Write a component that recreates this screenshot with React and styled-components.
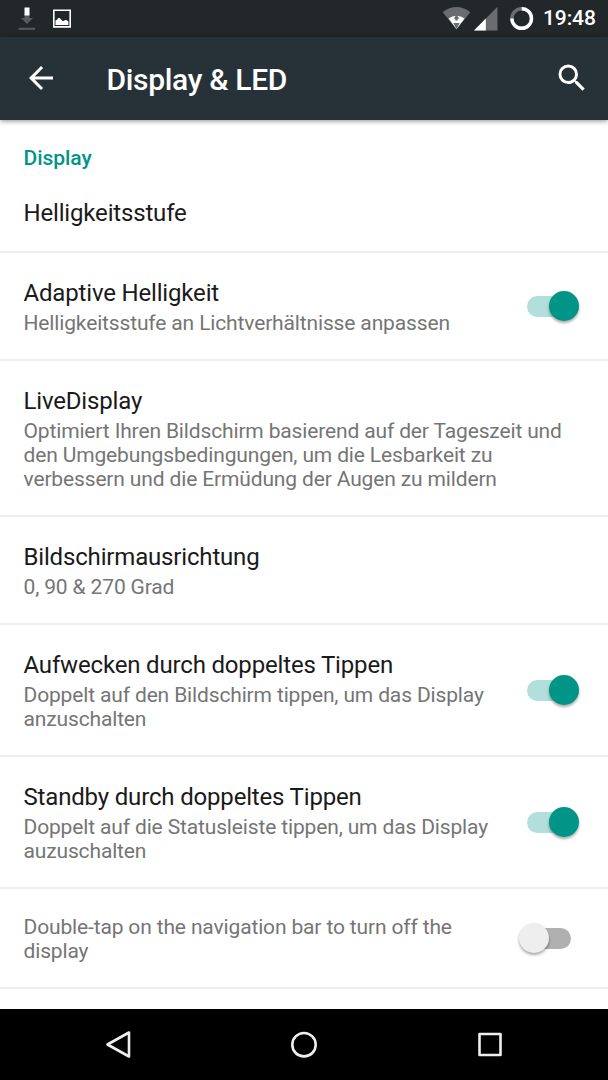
import React from "react";
import styled, { createGlobalStyle } from "styled-components";

const Global = createGlobalStyle`
  * { box-sizing: border-box; }
  body { margin: 0; background: #fff; font-family: Roboto, sans-serif; }
`;
const Screen = styled.div`
  width: 608px;
  height: 1080px;
  display: flex;
  flex-direction: column;
  overflow: hidden;
  background: #fff;
`;
const StatusBar = styled.header`
  height: 37px;
  flex: none;
  display: flex;
  align-items: center;
  justify-content: space-between;
  padding: 0 12px 0 16px;
  background: #22272a;
`;
const StatusGroup = styled.div`
  display: flex;
  align-items: center;
  gap: ${(p) => p.$gap}px;
  height: 37px;
`;
const Clock = styled.span`
  width: 53px;
  color: #fff;
  font-size: 21px;
  font-weight: 500;
  line-height: 37px;
  letter-spacing: -0.1px;
  white-space: nowrap;
`;
const AppBar = styled.div`
  height: 83px;
  flex: none;
  display: flex;
  align-items: center;
  padding: 0 18px 1px 23px;
  background: #263238;
  box-shadow: 0 1px 5px rgba(0, 0, 0, 0.45);
  z-index: 1;
`;
const Heading = styled.h1`
  margin: 3px 0 0 47.5px;
  flex: 1;
  color: #fff;
  font-size: 30px;
  font-weight: 500;
  line-height: 36px;
  letter-spacing: -0.32px;
`;
const List = styled.main`
  flex: 1;
  overflow: hidden;
`;
const Section = styled.h2`
  margin: 0;
  height: 54px;
  padding: 26px 23.5px 0;
  color: #009587;
  font-size: 21px;
  font-weight: 500;
  line-height: 25px;
  letter-spacing: -0.05px;
`;
const Row = styled.div`
  display: flex;
  align-items: center;
  justify-content: space-between;
  height: ${(p) => p.$height}px;
  padding: 0 24px 0 23.5px;
  border-bottom: 2px solid #eeeeee;
`;
const Copy = styled.div`
  padding-top: 1px;
`;
const Title = styled.div`
  color: #1a1a1a;
  font-size: 24px;
  line-height: 31px;
  letter-spacing: -0.17px;
  white-space: nowrap;
`;
const Summary = styled.div`
  color: #757575;
  font-size: 21px;
  line-height: 24px;
  letter-spacing: -0.145px;
  white-space: pre;

  ${Title} + & {
    margin-top: 2px;
  }
`;
const Switch = styled.div`
  flex: none;
  width: 44px;
  height: 21px;
  margin: 0 13px 0 8px;
  border-radius: 11px;
  background: ${(p) => (p.$on ? "#b2dfdb" : "#b0b0b0")};
  display: flex;
  align-items: center;
`;
const Thumb = styled.div`
  flex: none;
  width: 30px;
  height: 30px;
  margin-left: ${(p) => (p.$on ? 22 : -8)}px;
  border-radius: 50%;
  background: ${(p) => (p.$on ? "#009587" : "#eeeeee")};
  box-shadow: 0 2px 3px rgba(0, 0, 0, 0.35);
`;
const NavBar = styled.nav`
  height: 71px;
  flex: none;
  display: flex;
  align-items: center;
  justify-content: center;
  gap: 146px;
  background: #000;
`;

const rows = [
  { title: "Helligkeitsstufe", height: 79 },
  { title: "Adaptive Helligkeit", summary: "Helligkeitsstufe an Lichtverhältnisse anpassen", on: true, height: 108 },
  {
    title: "LiveDisplay",
    summary: "Optimiert Ihren Bildschirm basierend auf der Tageszeit und\nden Umgebungsbedingungen, um die Lesbarkeit zu\nverbessern und die Ermüdung der Augen zu mildern",
    height: 156,
  },
  { title: "Bildschirmausrichtung", summary: "0, 90 & 270 Grad", height: 108 },
  { title: "Aufwecken durch doppeltes Tippen", summary: "Doppelt auf den Bildschirm tippen, um das Display\nanzuschalten", on: true, height: 132 },
  { title: "Standby durch doppeltes Tippen", summary: "Doppelt auf die Statusleiste tippen, um das Display\nauzuschalten", on: true, height: 132 },
  { summary: "Double-tap on the navigation bar to turn off the\ndisplay", on: false, height: 100 },
];

const DownloadIcon = () => (
  <svg width="22" height="37" viewBox="16 0 22 37">
    <path d="M24.5 15h5v3H33L27 24l-6-6h3.500z" fill="#585c5e" />
    <path d="M24.5 7.500h5v8h-5z" fill="#fff" />
    <path d="M18.500 27.800H35v2H18.500z" fill="#585c5e" />
  </svg>
);
const PictureIcon = () => (
  <svg width="20" height="37" viewBox="52 0 20 37">
    <path d="M53.800 10.300h16.400v16.600H53.800z" fill="none" stroke="#fff" strokeWidth="1.600" />
    <path d="M55.500 25v-4.500l1.500-.8 1.300-1.600h1.500l1.400 1.700 1.800 1.400 2.200-1.200h1.200l2 1.600V25z" fill="#fff" />
  </svg>
);
const SignalIcons = () => (
  <svg width="92" height="37" viewBox="442 0 92 37">
    <path d="M442.700 12.200Q456.500 2 470.300 12.200L456.500 29.500z" fill="#6a6d6f" />
    <path d="M448.600 18.500Q452 16 456.500 15.800Q461 16 464.500 18.500L456.500 29z" fill="#fff" />
    <path d="M456.500 14.500l2.800 4.300h-1.600v1.700h-2.400v-1.700h-1.600zM453.300 23h6.400L456.500 29z" fill="#6a6d6f" />
    <path d="M497.500 6.800V30.500H474z" fill="#6a6d6f" />
    <path d="M485.800 18.600V30.500H474z" fill="#fff" />
    <circle cx="521.700" cy="18.500" r="9.800" fill="none" stroke="#6a6d6f" strokeWidth="3.400" />
    <path d="M521.700 8.700A9.800 9.800 0 1 1 511.900 18.500" fill="none" stroke="#fff" strokeWidth="3.400" />
  </svg>
);
const BackArrow = () => (
  <svg width="36" height="36" viewBox="0 0 24 24">
    <path d="M20 11H7.830l5.590-5.590L12 4l-8 8 8 8 1.410-1.410L7.830 13H20v-2z" fill="#fff" />
  </svg>
);
const SearchIcon = () => (
  <svg width="36" height="36" viewBox="0 0 24 24">
    <path d="M15.500 14h-.790l-.280-.270A6.470 6.470 0 0 0 16 9.500 6.500 6.500 0 1 0 9.500 16c1.610 0 3.090-.590 4.230-1.570l.270.280v.790l5 4.990L20.490 19l-4.990-5zm-6 0C7.010 14 5 11.990 5 9.500S7.010 5 9.500 5 14 7.010 14 9.500 11.990 14 9.500 14z" fill="#fff" />
  </svg>
);
const NavIcon = ({ children }) => (
  <svg width="40" height="40" viewBox="0 0 40 40" fill="none" stroke="#eee" strokeWidth="2.600" strokeLinejoin="round">
    {children}
  </svg>
);

export default function App() {
  return (
    <Screen>
      <Global />
      <StatusBar>
        <StatusGroup $gap={14}>
          <DownloadIcon />
          <PictureIcon />
        </StatusGroup>
        <StatusGroup $gap={9}>
          <SignalIcons />
          <Clock>19:48</Clock>
        </StatusGroup>
      </StatusBar>
      <AppBar>
        <BackArrow />
        <Heading>Display &amp; LED</Heading>
        <SearchIcon />
      </AppBar>
      <List>
        <Section>Display</Section>
        {rows.map((r) => (
          <Row key={r.summary || r.title} $height={r.height}>
            <Copy>
              {r.title && <Title>{r.title}</Title>}
              {r.summary && <Summary>{r.summary}</Summary>}
            </Copy>
            {r.on !== undefined && (
              <Switch $on={r.on}>
                <Thumb $on={r.on} />
              </Switch>
            )}
          </Row>
        ))}
      </List>
      <NavBar>
        <NavIcon><path d="M9.500 19.500L31 7.500V31.500z" /></NavIcon>
        <NavIcon><circle cx="20" cy="19.700" r="11.700" /></NavIcon>
        <NavIcon><path d="M9.500 9h21v21h-21z" /></NavIcon>
      </NavBar>
    </Screen>
  );
}
